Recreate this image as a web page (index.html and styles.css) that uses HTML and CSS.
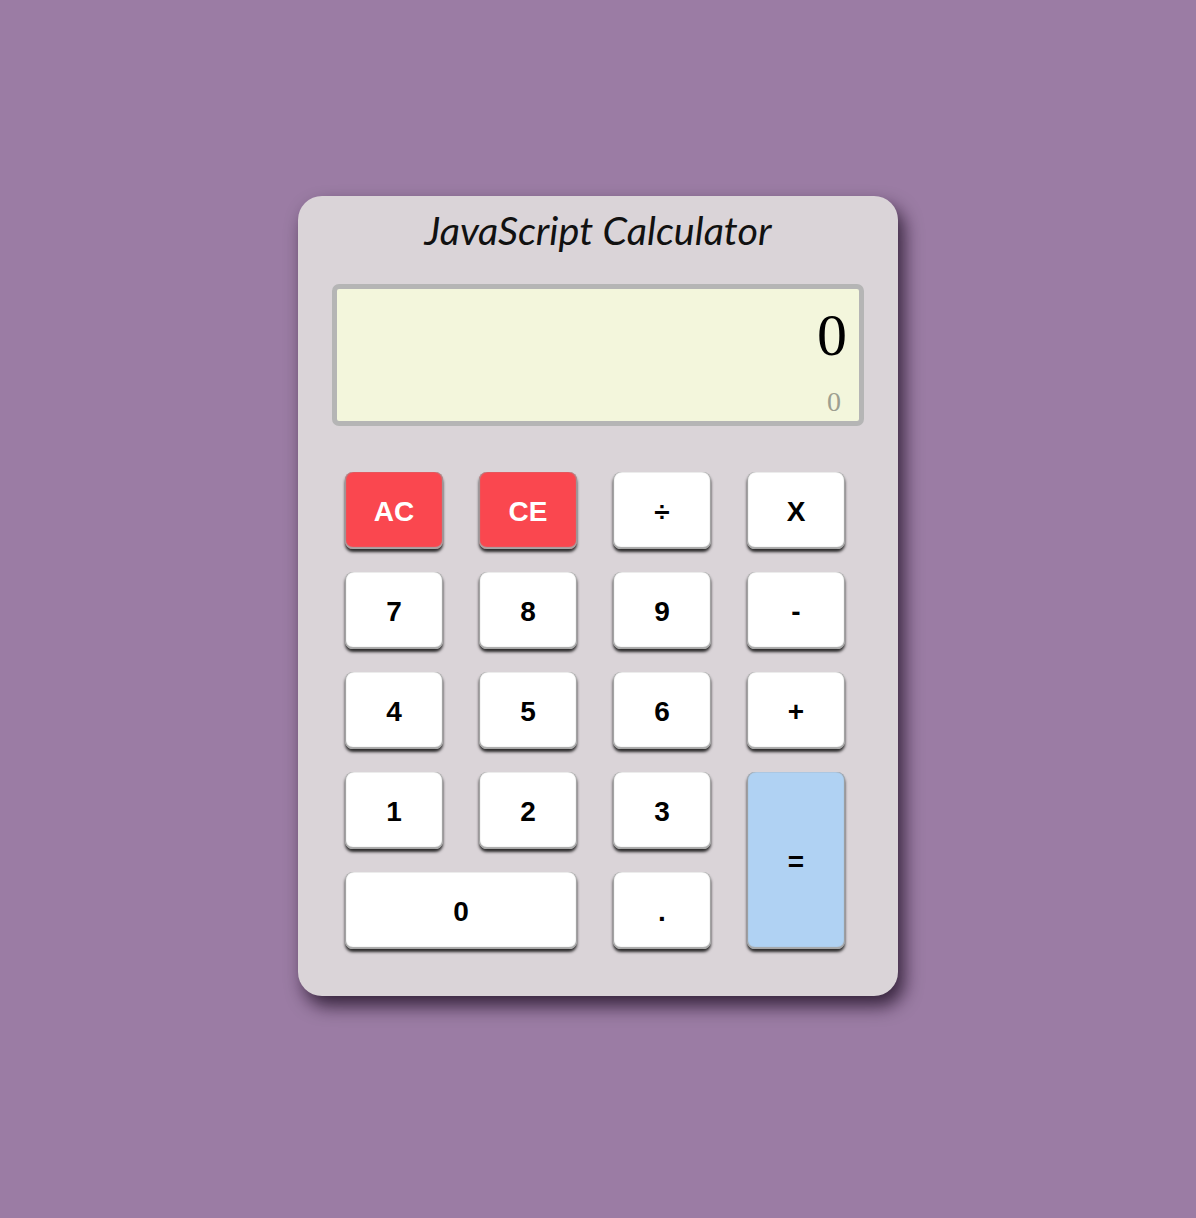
FILE: index.html
```html
<!DOCTYPE html>
<html lang="en">
<head>
<meta charset="utf-8">
<title>JavaScript Calculator</title>
<link rel="stylesheet" href="styles.css">
</head>
<body>
<div class="calculator">
  <h1 class="title">JavaScript Calculator</h1>
  <div class="display">
    <div class="display-main">0</div>
    <div class="display-sub">0</div>
  </div>
  <div class="keys">
    <button class="key key-red">AC</button>
    <button class="key key-red">CE</button>
    <button class="key">÷</button>
    <button class="key">X</button>
    <button class="key">7</button>
    <button class="key">8</button>
    <button class="key">9</button>
    <button class="key">-</button>
    <button class="key">4</button>
    <button class="key">5</button>
    <button class="key">6</button>
    <button class="key">+</button>
    <button class="key">1</button>
    <button class="key">2</button>
    <button class="key">3</button>
    <button class="key key-equals">=</button>
    <button class="key key-zero">0</button>
    <button class="key">.</button>
  </div>
</div>
</body>
</html>
```

FILE: styles.css
```css
html, body {
  margin: 0;
  padding: 0;
}
body {
  background: #9b7ca4;
  min-height: 1218px;
  display: flex;
  justify-content: center;
  align-items: flex-start;
  padding-top: 196px;
  box-sizing: border-box;
}
.calculator {
  width: 600px;
  box-sizing: border-box;
  background: #dad4d8;
  border-radius: 24px;
  padding: 10px 34px 47px;
  box-shadow: 6px 10px 18px rgba(20, 5, 25, 0.75);
}
.title {
  margin: 0 0 31px;
  font-family: Lato, "Open Sans", sans-serif;
  font-style: italic;
  font-weight: 400;
  font-size: 39.5px;
  line-height: 1.2;
  text-align: center;
  color: #111;
}
.display {
  height: 142px;
  box-sizing: border-box;
  border: 5px solid #b5b5b5;
  border-radius: 7px;
  background: #f3f6dc;
  padding: 18px 12px 6px;
  display: flex;
  flex-direction: column;
  align-items: flex-end;
  font-family: "Liberation Serif", "Times New Roman", serif;
}
.display-main {
  font-size: 60px;
  line-height: 56px;
  color: #000;
}
.display-sub {
  margin-top: 25px;
  font-size: 28px;
  line-height: 28px;
  color: #9d9f90;
  padding-right: 6px;
}
.keys {
  margin: 46px 13px 0;
  display: grid;
  grid-template-columns: repeat(4, 98px);
  grid-auto-rows: 77px;
  column-gap: 36px;
  row-gap: 23px;
}
.key {
  border: none;
  margin: 0;
  padding: 3px 0 0;
  background: #fff;
  border-radius: 8px;
  font-family: "Liberation Sans", Arial, sans-serif;
  font-weight: 700;
  font-size: 28px;
  color: #000;
  box-shadow: inset 0 -2px 1px #a6a6a6, inset 1px 0 1px #9a9a9a, inset -1px 0 1px #9a9a9a, 0 3px 3px rgba(0, 0, 0, 0.8);
}
.key-red {
  background: #fa474f;
  color: #fff;
}
.key-equals {
  grid-column: 4;
  grid-row: 4 / span 2;
  background: #b0d2f3;
}
.key-zero {
  grid-column: 1 / span 2;
}
```
